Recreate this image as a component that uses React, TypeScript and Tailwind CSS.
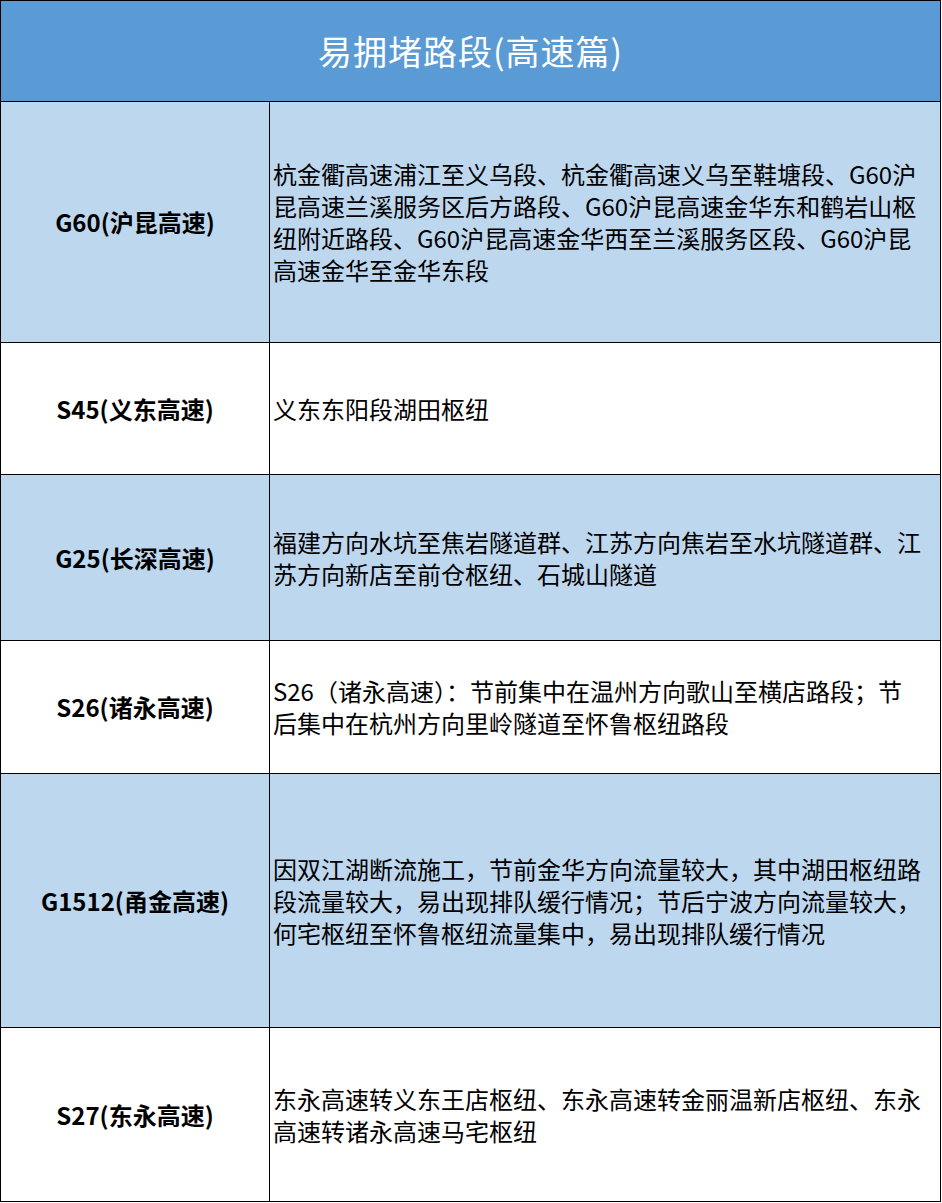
const rows = [
  {
    name: "G60(沪昆高速)",
    h: "h-[241px]",
    bg: "bg-[#bdd7ee]",
    lines: [
      "杭金衢高速浦江至义乌段、杭金衢高速义乌至鞋塘段、G60沪",
      "昆高速兰溪服务区后方路段、G60沪昆高速金华东和鹤岩山枢",
      "纽附近路段、G60沪昆高速金华西至兰溪服务区段、G60沪昆",
      "高速金华至金华东段",
    ],
  },
  {
    name: "S45(义东高速)",
    h: "h-[132px]",
    bg: "bg-white",
    lines: ["义东东阳段湖田枢纽"],
  },
  {
    name: "G25(长深高速)",
    h: "h-[166px]",
    bg: "bg-[#bdd7ee]",
    lines: [
      "福建方向水坑至焦岩隧道群、江苏方向焦岩至水坑隧道群、江",
      "苏方向新店至前仓枢纽、石城山隧道",
    ],
  },
  {
    name: "S26(诸永高速)",
    h: "h-[133px]",
    bg: "bg-white",
    lines: [
      "S26（诸永高速）：节前集中在温州方向歌山至横店路段；节",
      "后集中在杭州方向里岭隧道至怀鲁枢纽路段",
    ],
  },
  {
    name: "G1512(甬金高速)",
    h: "h-[254px]",
    bg: "bg-[#bdd7ee]",
    lines: [
      "因双江湖断流施工，节前金华方向流量较大，其中湖田枢纽路",
      "段流量较大，易出现排队缓行情况；节后宁波方向流量较大，",
      "何宅枢纽至怀鲁枢纽流量集中，易出现排队缓行情况",
    ],
  },
  {
    name: "S27(东永高速)",
    h: "h-[173px]",
    bg: "bg-white",
    lines: [
      "东永高速转义东王店枢纽、东永高速转金丽温新店枢纽、东永",
      "高速转诸永高速马宅枢纽",
    ],
  },
];

const font = "font-['Noto_Sans_CJK_SC','Noto_Sans',sans-serif]";

export default function App() {
  return (
    <div className={`w-[941px] h-[1202px] border border-black bg-white text-black ${font}`}>
      <div className="h-[101px] border-b border-black bg-[#5b9bd5] flex items-center justify-center">
        <span className="text-white text-[34px] leading-none tracking-[1px]">易拥堵路段(高速篇)</span>
      </div>
      {rows.map((r, i) => (
        <div
          key={r.name}
          className={`flex ${r.h} ${r.bg} ${i < rows.length - 1 ? "border-b border-black" : ""}`}
        >
          <div className="w-[269px] shrink-0 border-r border-black flex items-center justify-center">
            <span className="text-[24px] font-bold leading-none">{r.name}</span>
          </div>
          <div className="flex-1 flex items-center pl-[3px]">
            <div className="text-[24px] leading-[32px] whitespace-nowrap">
              {r.lines.map((l) => (
                <div key={l}>{l}</div>
              ))}
            </div>
          </div>
        </div>
      ))}
    </div>
  );
}
